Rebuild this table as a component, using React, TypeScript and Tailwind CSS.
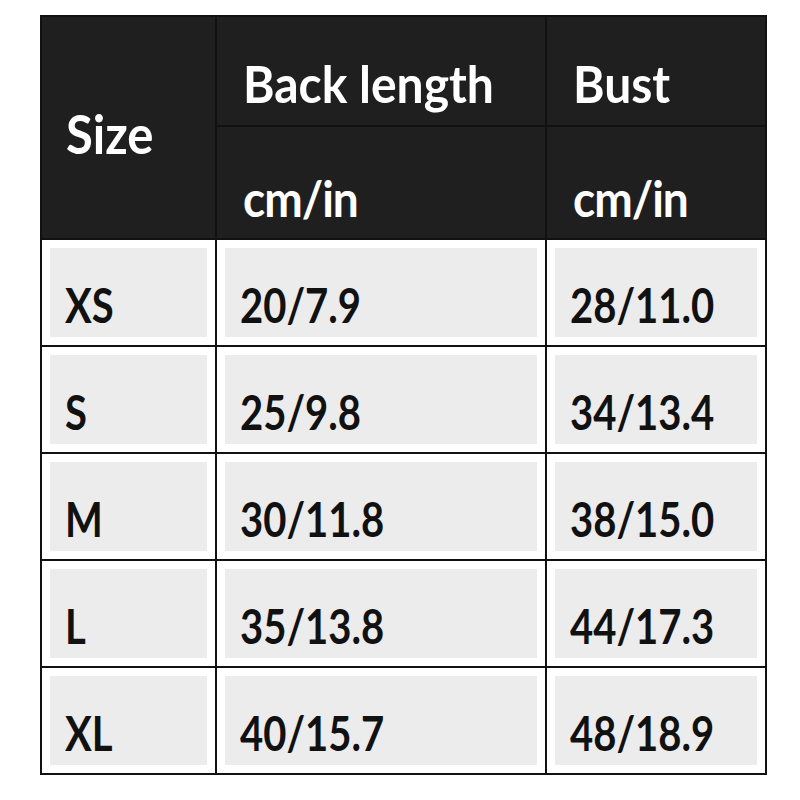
const rows = [
  { size: "XS", back: "20/7.9", bust: "28/11.0" },
  { size: "S", back: "25/9.8", bust: "34/13.4" },
  { size: "M", back: "30/11.8", bust: "38/15.0" },
  { size: "L", back: "35/13.8", bust: "44/17.3" },
  { size: "XL", back: "40/15.7", bust: "48/18.9" },
];

function Cell({ text, last }: { text: string; last?: boolean }) {
  return (
    <div className={`h-full bg-white p-[8px] ${last ? "" : "border-r-2 border-[#111]"}`}>
      <div className="h-full bg-[#ececec] pl-[15px] pt-[41px]">
        <span className="block origin-bottom-left scale-y-[1.18] text-[40px] font-bold leading-none text-[#111]">
          {text}
        </span>
      </div>
    </div>
  );
}

export default function App() {
  return (
    <div className="min-h-[800px] bg-white pt-[15px] pl-[40px]" style={{ fontFamily: "Lato, 'Open Sans', sans-serif" }}>
      <div className="w-[727px] border-2 border-[#111]">
        {/* Header */}
        <div className="grid h-[221px] grid-cols-[175px_330px_218px] bg-[#1f1f1f] text-white">
          <div className="border-r-2 border-[#111] pl-[24px] pt-[95px]">
            <span className="block origin-bottom-left scale-y-[1.1] text-[49px] font-bold leading-none">Size</span>
          </div>
          {[["Back length", true], ["Bust", false]].map(([label, border]) => (
            <div key={label as string} className={`flex flex-col ${border ? "border-r-2 border-[#111]" : ""}`}>
              <div className="h-[110px] border-b-2 border-[#111] pl-[26px] pt-[44px]">
                <span className="block origin-bottom-left scale-y-[1.06] text-[48px] font-bold leading-none">{label}</span>
              </div>
              <div className="flex-1 pl-[26px] pt-[50px]">
                <span className="block origin-bottom-left scale-y-[1.08] text-[46px] font-bold tracking-[-1px] leading-none">cm/in</span>
              </div>
            </div>
          ))}
        </div>

        {/* Body */}
        {rows.map((r) => (
          <div key={r.size} className="grid h-[107px] grid-cols-[175px_330px_218px] border-t-2 border-[#111]">
            <Cell text={r.size} />
            <Cell text={r.back} />
            <Cell text={r.bust} last />
          </div>
        ))}
      </div>
    </div>
  );
}
